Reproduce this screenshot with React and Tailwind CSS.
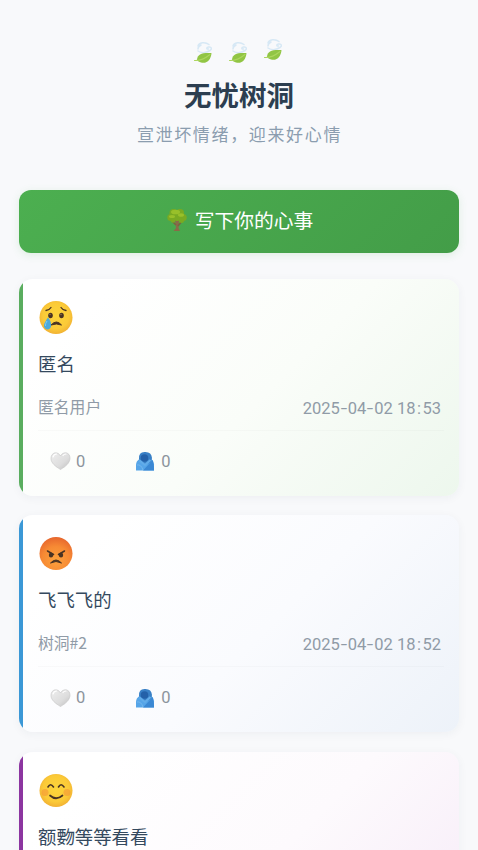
const Leaf = ({ up }) => (
  <svg className={`h-6 w-6 ${up ? "-mt-[2px]" : "mt-px"}`} viewBox="0 0 24 24" fill="none">
    <g stroke="#cfe5f4" strokeWidth="1.500" strokeLinecap="round" opacity=".8">
      <path d="M6 10C9 12 14 12 18 9.500c2.500-1.500 1.500-4-1.500-3.500-2.500.5-2 2.500 0 2" />
      <path d="M6 5c1-3.500 7-4.500 11-1.500M6 8c0-2 1-3 3-4" />
    </g>
    <path d="M5 18.500C5.500 13 10 11.500 19.500 12C19 19 14 24.500 6.500 20.500Z" fill="#91c544" />
    <path d="M2.500 19.500C8 20 13 17.500 18 13.500" stroke="#acd65d" strokeWidth="1.100" strokeLinecap="round" />
  </svg>
);

const Tree = () => (
  <svg className="h-6 w-5 shrink-0" viewBox="0 0 20 24">
    <path d="M8 11 9 20 6.500 23h6.500L11.500 20 12 11Z" fill="#8a6a48" />
    <path d="m5 13 4 4M15 13l-4 5" stroke="#7d6040" strokeWidth="1.500" />
    <g fill="#7aaa22">
      <circle cx="3.800" cy="9.500" r="3.500" /><circle cx="6.500" cy="5" r="4" /><circle cx="13" cy="5" r="4" />
      <circle cx="16.200" cy="9.500" r="3.500" /><circle cx="10" cy="8.500" r="4.500" /><circle cx="14.500" cy="12.500" r="2.500" /><circle cx="6" cy="12.500" r="2.300" />
    </g>
    <g fill="#98c02a"><ellipse cx="8.500" cy="4" rx="4.500" ry="2.300" /><ellipse cx="14" cy="7" rx="3" ry="1.800" /><ellipse cx="5" cy="8.500" rx="3" ry="1.500" /></g>
  </svg>
);

const Heart = () => (
  <svg className="h-5 w-[21px]" viewBox="0 0 21 20">
    <defs>
      <linearGradient id="heart" x1="0" y1="0" x2="1" y2="1">
        <stop stopColor="#eeeeee" /><stop offset=".6" stopColor="#dddddd" /><stop offset="1" stopColor="#bebebe" />
      </linearGradient>
    </defs>
    <path d="M10.500 5C8 0 1 1 1 7.500 1 12 5.500 15.500 10.500 18.500 15.500 15.500 20 12 20 7 20 1 13 0 10.500 5Z" fill="url(#heart)" stroke="#cacaca" strokeWidth=".7" />
    <path d="M3 6q1-3 3.500-3M13 4.500q1-1.500 3-1.500" stroke="#fff" strokeWidth="1.200" fill="none" strokeLinecap="round" />
  </svg>
);

const Hug = () => (
  <svg className="h-5 w-5" viewBox="0 0 20 20">
    <path d="M1 19.500V14q0-4 3.500-6L16 7.500q3 2.500 3 6v6Z" fill="#56a5e8" />
    <path d="M8 19.500 14 13l3.500-4q1.500 3 1.500 10.500Z" fill="#3b88d3" />
    <path d="M4 8Q3.500 1 9.500 1q7-.5 7.500 6l-1 4-6 3.500Z" fill="#3980c6" />
    <circle cx="9.500" cy="7" r="3.800" fill="#2461a9" />
    <path d="m4.500 9.500 5.500 4.500 5.500-5" fill="none" stroke="#62ace9" strokeWidth="2.200" strokeLinejoin="round" />
    <path d="M2 14q4-1 6 5" stroke="#75b7ec" fill="none" />
  </svg>
);

const Face = ({ kind }) => {
  const angry = kind === "angry";
  const ink = "#493323";
  return (
    <svg className="h-9 w-9" viewBox="0 0 36 36" fill="none">
      <defs>
        <radialGradient id={kind} cx=".5" cy={angry ? ".7" : ".45"} r={angry ? ".75" : ".6"}>
          {angry ? (
            <><stop stopColor="#fca23c" /><stop offset=".55" stopColor="#f78a34" /><stop offset="1" stopColor="#e4602c" /></>
          ) : (
            <><stop stopColor="#fdd53a" /><stop offset=".65" stopColor="#fbca38" /><stop offset="1" stopColor="#efaa32" /></>
          )}
        </radialGradient>
      </defs>
      <circle cx="18" cy="17.500" r="16.500" fill={`url(#${kind})`} />
      {kind === "sad" && (
        <>
          <path d="M8 10.500q3.500-.5 5-3M23 7.500q1.500 2.500 5 3" stroke={ink} strokeWidth="1.300" strokeLinecap="round" />
          <ellipse cx="12.500" cy="15.500" rx="2.300" ry="2.800" fill={ink} /><ellipse cx="23.500" cy="15.500" rx="2.300" ry="2.800" fill={ink} />
          <circle cx="12" cy="14.500" r=".7" fill="#a17b51" /><circle cx="23" cy="14.500" r=".7" fill="#a17b51" />
          <path d="M13 25q5.500-6 10.500 0-5-2-10.500 0Z" fill={ink} stroke={ink} strokeLinejoin="round" />
          <path d="M10 17.500q4 5 3 9c-1 4-6 4-7 0q-.5-3 4-9Z" fill="#4eaada" />
          <path d="M9 21q-2 3-1.500 5" stroke="#80caed" />
        </>
      )}
      {angry && (
        <>
          <path d="m9.500 15 6 3.500M26.500 15l-6 3.500" stroke={ink} strokeWidth="1.500" strokeLinecap="round" />
          <ellipse cx="13" cy="19" rx="2.200" ry="2.600" fill={ink} /><ellipse cx="23" cy="19" rx="2.200" ry="2.600" fill={ink} />
          <path d="M12.500 27q5.500-6 11 0-5.500-3-11 0Z" fill={ink} stroke={ink} strokeLinejoin="round" />
        </>
      )}
      {kind === "happy" && (
        <>
          <circle cx="7" cy="19.500" r="3.500" fill="#f27c38" opacity=".4" /><circle cx="29" cy="19.500" r="3.500" fill="#f27c38" opacity=".4" />
          <path d="M10 14q2.500-4.500 5.500 0M20.500 14q2.500-4.500 5.500 0" stroke={ink} strokeWidth="1.600" strokeLinecap="round" />
          <path d="M12 22.500q6 5.500 12.500 0" stroke={ink} strokeWidth="1.700" strokeLinecap="round" />
        </>
      )}
    </svg>
  );
};

const posts = [
  { kind: "sad", text: "匿名", author: "匿名用户", time: "2025-04-02 18:53", bar: "bg-[#5aad5f]", tone: "via-[#fafdf9] to-[#edf7ed]" },
  { kind: "angry", text: "飞飞飞的", author: "树洞#2", time: "2025-04-02 18:52", bar: "bg-[#3b98d6]", tone: "via-[#fafbfe] to-[#edf2f9]" },
  { kind: "happy", text: "额覅等等看看", bar: "bg-[#8c35a0]", tone: "via-[#fdfafd] to-[#f6eaf7]" },
];

// Hyphens and colons take nearly a full digit's width in timestamps.
const Timestamp = ({ value }) => (
  <time className="pt-[2px] font-[Roboto,sans-serif] text-[16.500px] tracking-[0px]">
    {value.split(/([-:])/).map((part, i) =>
      part === "-" ? (
        <span key={i} className="inline-block w-2 scale-x-140 text-center">-</span>
      ) : part === ":" ? (
        <span key={i} className="inline-block w-[7px] text-center">:</span>
      ) : (
        part
      )
    )}
  </time>
);

const Post = ({ kind, text, author, time, bar, tone }) => (
  <article className={`flex h-[217px] shrink-0 overflow-hidden rounded-[14px] bg-linear-135 from-white from-15% via-55% shadow-[0_2px_10px_rgba(30,50,70,0.05)] ${tone}`}>
    <div className={`w-1 shrink-0 ${bar}`} />
    <div className="min-w-0 grow px-[15px] pt-[21px]">
      <Face kind={kind} />
      <p className="mt-3 text-[18.400px] leading-[30px] text-[#34495e]">{text}</p>
      {author && (
        <>
          <div className="mt-[17px] flex h-[36px] justify-between border-b border-black/[0.02] pr-[3px] text-[15.800px] leading-6 text-[#909ba7]">
            <span>{author}</span>
            <Timestamp value={time} />
          </div>
          <div className="mt-[19px] flex gap-[50px] pl-3 font-[Roboto,sans-serif] text-[16.500px] leading-[22px] text-[#8c949d]">
            <span className="flex items-center gap-[5px]"><Heart /><span className="pt-px">0</span></span>
            <span className="flex items-center gap-[6px]"><Hug /><span className="pt-px">0</span></span>
          </div>
        </>
      )}
    </div>
  </article>
);

export default function App() {
  return (
    <main className="h-[850px] overflow-hidden bg-[#f8f9fb] px-[19px] pt-[40px] font-['Noto_Sans_CJK_SC',sans-serif]">
      <header className="flex h-[149.500px] flex-col items-center">
        <div className="flex gap-[11px]"><Leaf /><Leaf /><Leaf up /></div>
        <h1 className="mt-[9px] text-[27.500px] leading-10 font-bold text-[#2c3e50]">无忧树洞</h1>
        <p className="mt-[7px] pl-px text-[17px] leading-[26px] tracking-[1.650px] text-[#8b9daf]">宣泄坏情绪，迎来好心情</p>
      </header>
      <button className="flex h-[63px] w-full items-center justify-center gap-[8px] rounded-[12px] bg-linear-135 from-[#4caf50] to-[#439d48] pb-[2px] pl-[2px] text-[19.800px] text-white shadow-[0_2px_8px_rgba(76,175,80,0.15)]">
        <Tree />写下你的心事
      </button>
      <section className="mt-[26px] flex flex-col gap-[19.500px]">
        {posts.map((post) => <Post key={post.kind} {...post} />)}
      </section>
    </main>
  );
}
